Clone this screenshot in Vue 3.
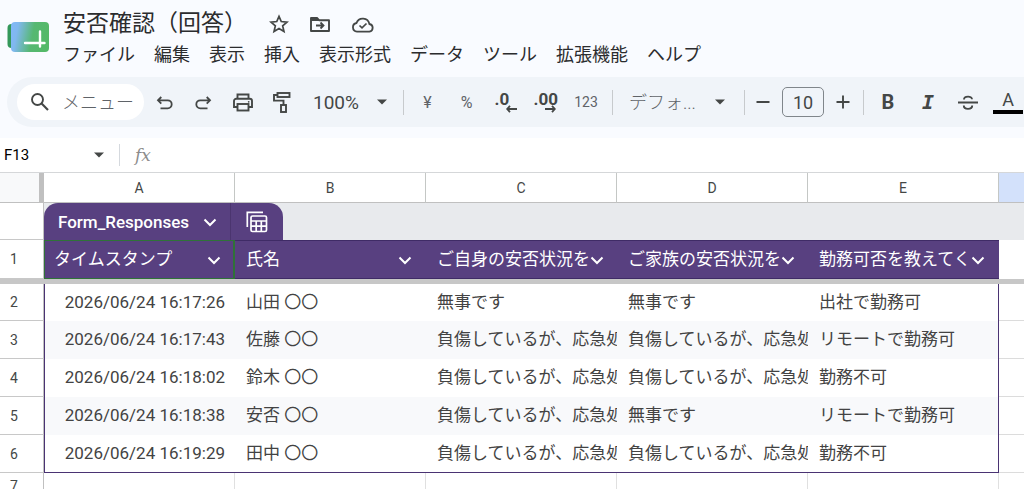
<script setup>
import { ref } from 'vue'

const menus = ['ファイル', '編集', '表示', '挿入', '表示形式', 'データ', 'ツール', '拡張機能', 'ヘルプ']
const columns = ['A', 'B', 'C', 'D', 'E']
const headings = [
  'タイムスタンプ',
  '氏名',
  'ご自身の安否状況を',
  'ご家族の安否状況を',
  '勤務可否を教えてく',
]
const injured = '負傷しているが、応急処'
const rows = [
  ['2026/06/24 16:17:26', '山田 〇〇', '無事です', '無事です', '出社で勤務可'],
  ['2026/06/24 16:17:43', '佐藤 〇〇', injured, injured, 'リモートで勤務可'],
  ['2026/06/24 16:18:02', '鈴木 〇〇', injured, injured, '勤務不可'],
  ['2026/06/24 16:18:38', '安否 〇〇', injured, '無事です', 'リモートで勤務可'],
  ['2026/06/24 16:19:29', '田中 〇〇', injured, injured, '勤務不可'],
]
const cellName = ref('F13')
const formula = ref('')
const fontSize = ref('10')
</script>

<template>
  <div class="app">
    <header class="top">
      <svg class="logo" width="42" height="30" viewBox="0 0 42 30" aria-hidden="true">
        <defs>
          <linearGradient id="logoFill" x1="0" x2="1" y1="0" y2="0.15">
            <stop offset="0" stop-color="#82b8fa" />
            <stop offset="0.2" stop-color="#80b8ee" />
            <stop offset="0.62" stop-color="#56b872" />
            <stop offset="1" stop-color="#55b968" />
          </linearGradient>
        </defs>
        <rect x="0.5" y="2" width="16" height="24" rx="4" fill="#34985a" />
        <rect x="4" y="0" width="38" height="30" rx="4" fill="url(#logoFill)" />
        <path d="M33 9.500V24.500M18 21H37.500" stroke="#fff" stroke-width="2.400" stroke-linecap="round" />
      </svg>
      <div class="heading">
        <div class="title-row">
          <h1>安否確認（回答）</h1>
          <button class="plain" aria-label="スター">
            <svg width="20" height="20" viewBox="0 0 20 20"><path d="M10 2.300l2.250 5.250 5.700.5-4.300 3.750 1.300 5.600L10 14.400l-4.950 3 1.300-5.600-4.300-3.750 5.700-.5z" fill="none" stroke="#444746" stroke-width="1.700" /></svg>
          </button>
          <button class="plain" aria-label="移動">
            <svg width="22" height="20" viewBox="0 0 22 20"><path d="M2 17V4h6l2 2.200h10V17z" fill="none" stroke="#444746" stroke-width="1.900" stroke-linejoin="round" /><path d="M2 3.500h6l2.500 3.500H2z" fill="#444746" /><path d="M7 11.500h7M11.500 8.500l3 3-3 3" fill="none" stroke="#444746" stroke-width="1.800" /></svg>
          </button>
          <button class="plain" aria-label="ドキュメントの状態">
            <svg width="24" height="20" viewBox="0 0 24 20"><path d="M6 17.700a4.400 4.400 0 0 1-.5-8.700 6.700 6.700 0 0 1 12.900 1 3.900 3.900 0 0 1 0 7.700z" fill="none" stroke="#444746" stroke-width="1.800" /><path d="M8.500 11.500l2.500 2.400 4.500-4.400" fill="none" stroke="#444746" stroke-width="1.700" /></svg>
          </button>
        </div>
        <nav class="menus">
          <button v-for="m in menus" :key="m" class="menu">{{ m }}</button>
        </nav>
      </div>
    </header>

    <div class="toolbar">
      <label class="search">
        <svg width="20" height="20" viewBox="0 0 20 20"><circle cx="7.500" cy="7.500" r="5.500" fill="none" stroke="#444746" stroke-width="1.900" /><path d="M11.600 11.600l6.400 6.400" stroke="#444746" stroke-width="2.100" /></svg>
        <input placeholder="メニュー" aria-label="メニュー" />
      </label>
      <div class="group">
        <button class="tool" aria-label="元に戻す">
          <svg width="20" height="20" viewBox="0 0 20 20"><path d="M6.300 5L3 8.300 6.300 11.600M3.300 8.300h9.400a4 4 0 0 1 0 8H5.500" fill="none" stroke="#444746" stroke-width="1.800" /></svg>
        </button>
        <button class="tool" aria-label="やり直し">
          <svg width="20" height="20" viewBox="0 0 20 20"><path d="M12.700 5L16 8.300l-3.300 3.300M15.700 8.300H6.300a4 4 0 0 0 0 8h7.200" fill="none" stroke="#444746" stroke-width="1.800" /></svg>
        </button>
        <button class="tool" aria-label="印刷">
          <svg width="22" height="20" viewBox="0 0 22 20"><g fill="none" stroke="#444746" stroke-width="1.900"><path d="M5.500 6.500V2.500h11v4M5.500 15H2V9a2.300 2.300 0 0 1 2.300-2.300h13.400A2.300 2.300 0 0 1 20 9v6h-3.500" /><rect x="5.500" y="12" width="11" height="6.500" /></g><circle cx="16.700" cy="9.800" r="0.900" fill="#444746" /></svg>
        </button>
        <button class="tool" aria-label="書式を貼り付け">
          <svg width="20" height="24" viewBox="0 0 20 24"><g fill="none" stroke="#444746" stroke-width="1.900"><rect x="5.500" y="3" width="12" height="4" /><path d="M5.500 5H2v5.600h9.500v4.400" /><rect x="9" y="15" width="5" height="7" /></g></svg>
        </button>
        <div class="pick zoom">
          <select aria-label="ズーム"><option>100%</option></select>
          <svg class="caret" width="10" height="6" viewBox="0 0 10 6"><path d="M0 0.500h10L5 5.500z" /></svg>
        </div>
      </div>
      <span class="sep"></span>
      <div class="group">
        <button class="tool small">¥</button>
        <button class="tool small">%</button>
        <button class="tool decimal" aria-label="小数点以下の桁数を減らす">
          <span>.0</span>
          <svg class="less" width="11" height="8" viewBox="0 0 11 8"><path d="M4 0.800L1.200 4 4 7.200M1.200 4H11" /></svg>
        </button>
        <button class="tool decimal" aria-label="小数点以下の桁数を増やす">
          <span>.00</span>
          <svg class="more" width="11" height="8" viewBox="0 0 11 8"><path d="M7 0.800L9.800 4 7 7.200M9.800 4H0" /></svg>
        </button>
        <button class="tool small wide">123</button>
      </div>
      <span class="sep"></span>
      <div class="pick font">
        <select aria-label="フォント"><option>デフォ...</option></select>
        <svg class="caret" width="10" height="6" viewBox="0 0 10 6"><path d="M0 0.500h10L5 5.500z" /></svg>
      </div>
      <span class="sep"></span>
      <div class="group size">
        <button class="step" aria-label="縮小"><svg width="14" height="14" viewBox="0 0 14 14"><path d="M0.500 7h13" stroke="#444746" stroke-width="1.900" /></svg></button>
        <input v-model="fontSize" aria-label="フォントサイズ" />
        <button class="step" aria-label="拡大"><svg width="14" height="14" viewBox="0 0 14 14"><path d="M0.500 7h13M7 0.500v13" stroke="#444746" stroke-width="1.900" /></svg></button>
      </div>
      <span class="sep"></span>
      <div class="group">
        <button class="style bold">B</button>
        <button class="style italic">I</button>
        <button class="style" aria-label="取り消し線">
          <svg width="20" height="20" viewBox="0 0 20 20"><path d="M0 10.500h20M6 7.500C6 3.700 14 3.700 14 7.200M5.800 13.500c0 4.500 8.400 4.500 8.400 0" fill="none" stroke="#444746" stroke-width="1.900" /></svg>
        </button>
        <button class="style color" aria-label="テキストの色"><span>A</span></button>
      </div>
    </div>

    <div class="formula">
      <input v-model="cellName" class="name" aria-label="名前ボックス" />
      <button class="plain" aria-label="範囲を選択"><svg class="caret" width="10" height="6" viewBox="0 0 10 6"><path d="M0 0.500h10L5 5.500z" /></svg></button>
      <span class="bar"></span>
      <label class="fx" for="fx">fx</label>
      <input id="fx" v-model="formula" class="entry" />
    </div>

    <table class="sheet">
      <colgroup>
        <col class="c-row" />
        <col v-for="c in columns" :key="c" class="c-data" />
        <col />
      </colgroup>
      <thead>
        <tr class="letters">
          <th class="corner"></th>
          <th v-for="c in columns" :key="c">{{ c }}</th>
          <th class="picked"></th>
        </tr>
      </thead>
      <tbody>
        <tr class="tabs">
          <th class="num"></th>
          <td colspan="6">
            <div class="tab">
              <button class="tab-name">
                <span>Form_Responses</span>
                <svg width="14" height="9" viewBox="0 0 14 9"><path class="chev" d="M1.500 1.500L7 7l5.500-5.500" /></svg>
              </button>
              <button class="tab-icon" aria-label="テーブル ビュー">
                <svg width="22" height="22" viewBox="0 0 22 22"><g fill="none" stroke="#fff" stroke-width="1.700"><path d="M1.300 16V1.300H17" /><rect x="5" y="5" width="15.500" height="15.500" rx="1.500" /><path d="M5 10h15.500M5 15.200h15.500M10.200 10v10.500M15.300 10v10.500" /></g></svg>
              </button>
            </div>
          </td>
        </tr>
        <tr class="fields">
          <th class="num">1</th>
          <th v-for="h in headings" :key="h" class="field">
            <div>
              <span>{{ h }}</span>
              <button class="plain" :aria-label="h + 'のメニュー'"><svg width="14" height="9" viewBox="0 0 14 9"><path class="chev" d="M1.500 1.500L7 7l5.500-5.500" /></svg></button>
            </div>
          </th>
          <td></td>
        </tr>
        <tr class="freeze"><td colspan="7"></td></tr>
        <tr v-for="(r, i) in rows" :key="i" class="record">
          <th class="num">{{ i + 2 }}</th>
          <td v-for="(v, j) in r" :key="j" class="value"><div>{{ v }}</div></td>
          <td class="out"></td>
        </tr>
        <tr class="empty">
          <th class="num">7</th>
          <td v-for="n in 6" :key="n"></td>
        </tr>
      </tbody>
    </table>
  </div>
</template>

<style>
body {
  margin: 0;
}
</style>

<style scoped>
.app {
  height: 100vh;
  overflow: hidden;
  background: #f9fbff;
  color: #2b2c2e;
  font-family: Roboto, "Noto Sans CJK JP", sans-serif;
}
* {
  box-sizing: border-box;
}
button, input, select {
  margin: 0;
  padding: 0;
  border: 0;
  background: none;
  color: inherit;
  font: inherit;
  outline: none;
}
svg {
  display: block;
  flex: none;
}
.plain {
  display: flex;
}
.top {
  display: flex;
  gap: 14px;
  padding: 8px 7px 0;
  height: 77px;
}
.logo {
  margin-top: 14px;
}
.title-row {
  display: flex;
  align-items: center;
  gap: 20px;
  height: 32px;
}
h1 {
  margin: 0 2px 0 0;
  font-size: 23px;
  line-height: 32px;
  font-weight: 400;
  white-space: nowrap;
}
.menus {
  display: flex;
  gap: 19px;
  height: 30px;
}
.menu {
  font-size: 18px;
  line-height: 30px;
  white-space: nowrap;
}
.toolbar {
  display: flex;
  align-items: center;
  height: 50px;
  margin-left: 7px;
  padding-left: 10px;
  border-radius: 25px 0 0 25px;
  background: #f0f4f9;
  color: #444746;
  overflow: hidden;
}
.toolbar > * {
  flex: none;
}
.search {
  display: flex;
  align-items: center;
  gap: 12px;
  width: 127px;
  height: 36px;
  margin-right: 1px;
  padding-left: 13px;
  border-radius: 18px;
  background: #fff;
}
.search input {
  width: 72px;
  font-size: 18px;
  font-weight: 300;
}
.search input::placeholder {
  color: #5f6368;
  opacity: 1;
}
.group {
  display: flex;
  align-items: center;
}
.tool {
  display: flex;
  align-items: center;
  justify-content: center;
  width: 39px;
  height: 36px;
}
.small {
  font-size: 16px;
  color: #5f6368;
}
.wide {
  width: 44px;
  font-size: 14px;
}
.decimal {
  position: relative;
  font-size: 17px;
  font-weight: 700;
  padding-bottom: 6px;
}
.decimal span {
  width: 22px;
  text-align: left;
}
.decimal svg {
  position: absolute;
  right: 8px;
  bottom: 7px;
  fill: none;
  stroke: #444746;
  stroke-width: 1.8;
}
.pick {
  position: relative;
  display: flex;
  align-items: center;
  height: 36px;
}
.pick select {
  appearance: none;
  width: 100%;
  height: 36px;
}
.pick .caret {
  position: absolute;
  pointer-events: none;
}
.caret {
  fill: #444746;
}
.zoom {
  width: 98px;
  font-size: 19px;
}
.zoom select {
  padding-left: 12px;
}
.zoom .caret {
  right: 12px;
}
.font {
  width: 123px;
  font-size: 18px;
  font-weight: 300;
  color: #5f6368;
}
.font select {
  padding-left: 12px;
}
.font .caret {
  right: 15px;
}
.sep {
  width: 1px;
  height: 25px;
  margin: 0 4px;
  background: #c7cacd;
}
.size {
  gap: 5px;
  padding-right: 2px;
}
.step {
  display: flex;
  align-items: center;
  justify-content: center;
  width: 28px;
  height: 30px;
}
.size input {
  width: 42px;
  height: 30px;
  border: 1px solid #80868b;
  border-radius: 5px;
  font-size: 18px;
  text-align: center;
}
.style {
  display: flex;
  align-items: center;
  justify-content: center;
  width: 40px;
  height: 36px;
}
.bold {
  font-size: 20px;
  font-weight: 700;
}
.italic {
  font-family: "DejaVu Sans Mono", monospace;
  font-size: 20px;
  font-weight: 700;
  font-style: italic;
}
.color span {
  width: 30px;
  border-bottom: 4px solid #000;
  font-size: 18px;
  line-height: 20px;
}
.formula {
  display: flex;
  align-items: center;
  height: 35px;
  margin-top: 11px;
  border-bottom: 1px solid #d5d7d9;
  background: #fff;
}
.name {
  width: 94px;
  padding-left: 4px;
  font-size: 15px;
  color: #000;
}
.bar {
  width: 1px;
  height: 22px;
  margin: 0 15px;
  background: #d5d9de;
}
.fx {
  font-family: "DejaVu Serif", serif;
  font-size: 17px;
  font-style: italic;
  color: #8c8c8c;
}
.entry {
  flex: 1;
  margin-left: 12px;
}
.sheet {
  width: 100%;
  table-layout: fixed;
  border-collapse: separate;
  border-spacing: 0;
  background: #fff;
}
.c-row {
  width: 44px;
}
.c-data {
  width: 191px;
}
th, td {
  padding: 0;
  font-weight: 400;
  overflow: hidden;
}
.letters th {
  height: 30px;
  border-right: 1px solid #c4c7c5;
  border-bottom: 1px solid #c0c0c0;
  font-size: 14px;
  color: #444746;
}
.letters .corner {
  border-right: 5px solid #c0c0c0;
  background: #f8f9fa;
}
.letters .picked {
  border-right: 0;
  background: #d3e1fb;
}
.num {
  border-right: 1px solid #c0c0c0;
  border-bottom: 1px solid #c8c8c8;
  padding-right: 15px;
  font-size: 14px;
  color: #444746;
}
.tabs td {
  height: 37px;
  background: #e8eaed;
}
.tab {
  display: flex;
  width: 239px;
  height: 37px;
  border-radius: 14px 14px 0 0;
  background: #584080;
  color: #fff;
}
.tab-name {
  display: flex;
  align-items: center;
  justify-content: space-between;
  width: 187px;
  padding: 0 13px 0 14px;
  border-right: 1px solid #4b356f;
  font-size: 17px;
  font-weight: 500;
}
.tab-name svg {
  margin-top: 2px;
}
.tab-icon {
  padding-left: 15px;
}
.chev {
  fill: none;
  stroke: #fff;
  stroke-width: 2;
}
.field {
  height: 39px;
  border-top: 1px solid #3f2b66;
  border-bottom: 1px solid #3f2b66;
  background: #584080;
  color: #fff;
  font-size: 17px;
  line-height: 24px;
}
.field:nth-child(2) {
  border: 1px solid #2f7238;
  border-right-width: 2px;
}
.field:nth-child(2) > div {
  padding: 0 12px 2px 9px;
}
.field > div {
  display: flex;
  align-items: center;
  justify-content: space-between;
  padding: 0 14px 2px 11px;
  white-space: nowrap;
}
.field button {
  margin-top: 4px;
}
.freeze td {
  height: 5px;
  background: #c7c7c7;
}
.record > * {
  height: 38px;
}
.record:nth-child(4) > * {
  height: 37px;
}
.value {
  padding-bottom: 2px;
  font-size: 17px;
  line-height: 24px;
  color: #434343;
}
.value > div {
  margin-left: 11px;
  overflow: hidden;
  white-space: nowrap;
}
.value:nth-child(2) {
  border-left: 1px solid #4a3373;
  text-align: right;
}
.value:nth-child(2) > div {
  padding-right: 10px;
}
.value:nth-child(6) {
  border-right: 1px solid #4a3373;
}
.record:nth-child(odd) .value {
  background: #f8f9fb;
}
.record:nth-last-child(2) .value {
  border-bottom: 1px solid #4a3373;
}
.out {
  border-bottom: 1px solid #dcdcdc;
}
.empty > * {
  height: 26px;
}
.empty td:not(:last-child) {
  border-right: 1px solid #e0e0e0;
}
</style>
